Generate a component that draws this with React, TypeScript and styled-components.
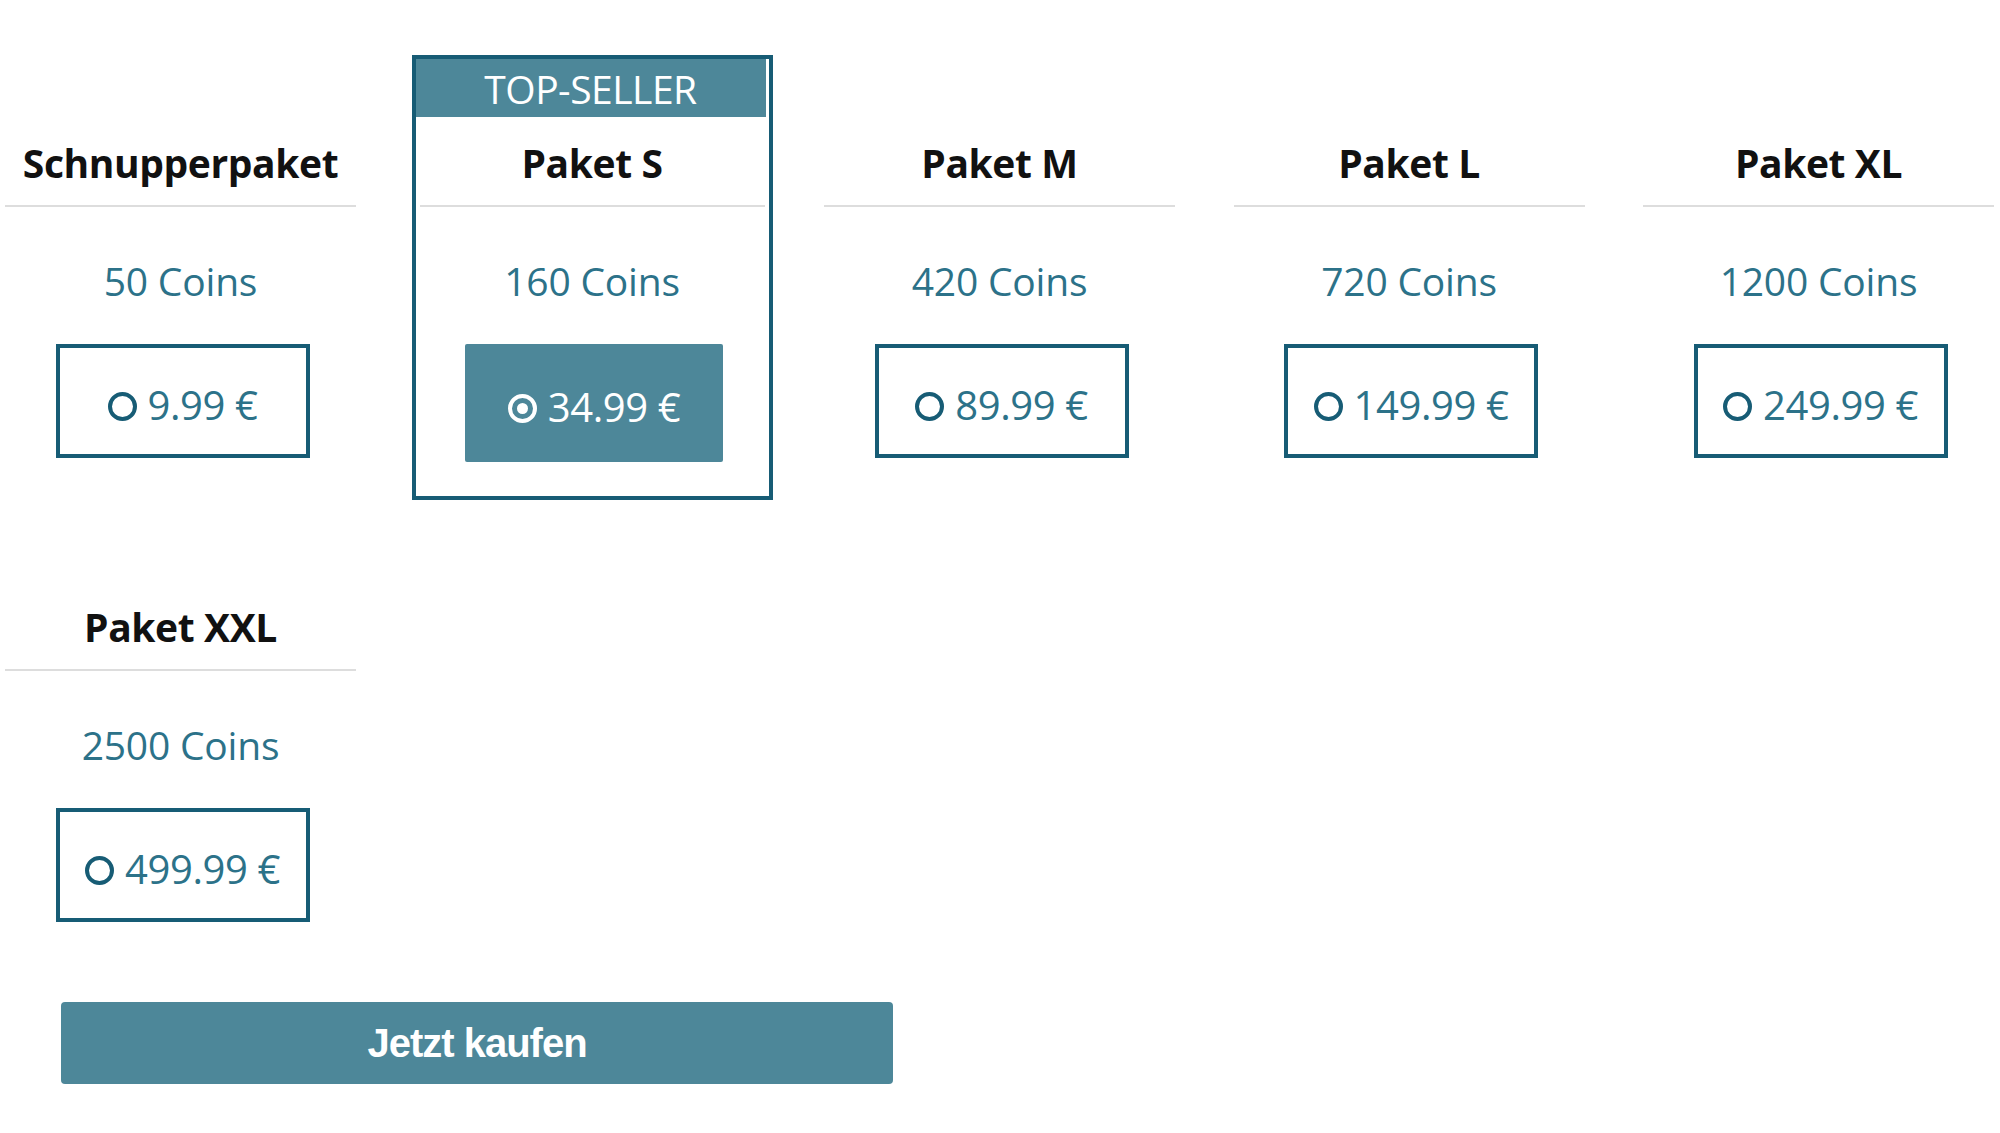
import React, { useState } from "react";
import styled, { createGlobalStyle } from "styled-components";

const Global = createGlobalStyle`
  html, body { margin: 0; padding: 0; background: #ffffff; }
  body { font-family: "Open Sans", "Noto Sans", sans-serif; }
  * { box-sizing: border-box; }
`;

const FILL = "#4d8799";
const BORDER = "#175c75";
const TEAL_TEXT = "#2c7289";

const Page = styled.div`
  width: 2000px;
  min-height: 1133px;
  padding: 55px 0 0 5px;
`;

const Grid = styled.div`
  display: grid;
  grid-template-columns: repeat(5, 351px);
  column-gap: 58.5px;
  row-gap: 19px;
`;

const Column = styled.div<{ $featured?: boolean }>`
  display: flex;
  flex-direction: column;
  ${(p) =>
    p.$featured
      ? `
    margin: 0 -7px 0 -3px;
    border: 4px solid ${BORDER};
    padding-bottom: 34px;
  `
      : `
    padding-bottom: 42px;
  `}
`;

const BadgeSlot = styled.div<{ $featured?: boolean }>`
  height: ${(p) => (p.$featured ? "58px" : "62px")};
  ${(p) =>
    p.$featured
      ? `
    margin-right: 3px;
    background: ${FILL};
    color: #ffffff;
    display: flex;
    align-items: center;
    justify-content: center;
    font-size: 39px;
    line-height: 1;
    letter-spacing: -0.5px;
  `
      : ""}
`;

const Body = styled.div<{ $featured?: boolean }>`
  display: flex;
  flex-direction: column;
  align-items: center;
  padding: ${(p) => (p.$featured ? "0 4px" : "0")};
`;

const Title = styled.div`
  margin-top: 21px;
  font-weight: 700;
  font-size: 39px;
  line-height: 50px;
  color: #111111;
  text-align: center;
  letter-spacing: -0.4px;
`;

const Divider = styled.div`
  align-self: stretch;
  margin-top: 17px;
  height: 2px;
  background: #dddddd;
`;

const Coins = styled.div`
  margin-top: 50px;
  font-size: 39px;
  line-height: 48px;
  color: ${TEAL_TEXT};
  text-align: center;
  letter-spacing: -0.2px;
`;

const PriceButton = styled.button<{ $selected?: boolean }>`
  margin-top: 39px;
  margin-left: 4px;
  width: ${(p) => (p.$selected ? "258px" : "254px")};
  height: ${(p) => (p.$selected ? "118px" : "114px")};
  border: ${(p) => (p.$selected ? "none" : `4px solid ${BORDER}`)};
  border-radius: ${(p) => (p.$selected ? "2px" : "0")};
  background: ${(p) => (p.$selected ? FILL : "#ffffff")};
  color: ${(p) => (p.$selected ? "#ffffff" : TEAL_TEXT)};
  display: flex;
  align-items: center;
  justify-content: center;
  gap: 11px;
  font-family: "Open Sans", "Noto Sans", sans-serif;
  font-size: 40px;
  letter-spacing: -0.4px;
  cursor: pointer;
  padding: 7px 0 0 0;
`;

const Radio = styled.span<{ $selected?: boolean }>`
  width: 29px;
  height: 29px;
  border-radius: 50%;
  border: 4px solid ${(p) => (p.$selected ? "#ffffff" : BORDER)};
  display: flex;
  align-items: center;
  justify-content: center;
  flex: none;
  margin-top: 3px;
  &::after {
    content: "";
    width: 11px;
    height: 11px;
    border-radius: 50%;
    background: #ffffff;
    display: ${(p) => (p.$selected ? "block" : "none")};
  }
`;

const BuyButton = styled.button`
  margin: 38px 0 0 56px;
  width: 832px;
  height: 82px;
  border: none;
  border-radius: 4px;
  background: ${FILL};
  color: #ffffff;
  font-family: "Liberation Sans", Arial, sans-serif;
  font-weight: 700;
  font-size: 40px;
  letter-spacing: -1px;
  cursor: pointer;
  display: flex;
  align-items: center;
  justify-content: center;
`;

type Pack = { name: string; coins: number; price: string; featured?: boolean };

const PACKS: Pack[] = [
  { name: "Schnupperpaket", coins: 50, price: "9.99" },
  { name: "Paket S", coins: 160, price: "34.99", featured: true },
  { name: "Paket M", coins: 420, price: "89.99" },
  { name: "Paket L", coins: 720, price: "149.99" },
  { name: "Paket XL", coins: 1200, price: "249.99" },
  { name: "Paket XXL", coins: 2500, price: "499.99" },
];

export default function App() {
  const [selected, setSelected] = useState(1);
  return (
    <Page>
      <Global />
      <Grid>
        {PACKS.map((p, i) => (
          <Column key={p.name} $featured={p.featured}>
            <BadgeSlot $featured={p.featured}>{p.featured ? "TOP-SELLER" : null}</BadgeSlot>
            <Body $featured={p.featured}>
              <Title>{p.name}</Title>
              <Divider />
              <Coins>{p.coins} Coins</Coins>
              <PriceButton $selected={selected === i} onClick={() => setSelected(i)}>
                <Radio $selected={selected === i} />
                <span>{p.price} €</span>
              </PriceButton>
            </Body>
          </Column>
        ))}
      </Grid>
      <BuyButton>Jetzt kaufen</BuyButton>
    </Page>
  );
}
